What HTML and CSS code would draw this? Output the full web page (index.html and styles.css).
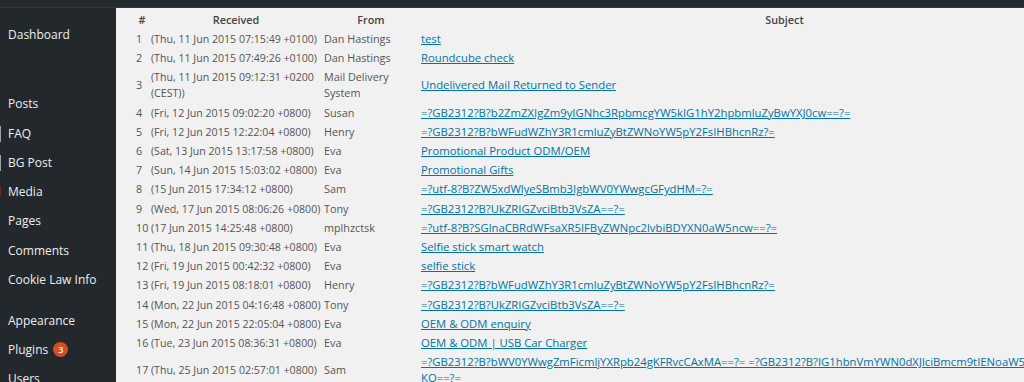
FILE: index.html
```html
<!DOCTYPE html>
<html lang="en">
<head>
    <meta charset="UTF-8">
    <title>Mail log</title>
    <link rel="stylesheet" href="styles.css">
</head>
<body>
<div class="adminbar"></div>
<div class="page">
    <ul class="menu">
        <li class="item">Dashboard</li>
        <li class="item sep-big">Posts</li>
        <li class="item"><i class="edge grey"></i>FAQ</li>
        <li class="item"><i class="edge grey"></i>BG Post</li>
        <li class="item"><i class="edge red"></i>Media</li>
        <li class="item">Pages</li>
        <li class="item">Comments</li>
        <li class="item">Cookie Law Info</li>
        <li class="item sep">Appearance</li>
        <li class="item">Plugins <span class="badge">3</span></li>
        <li class="item">Users</li>
    </ul>
    <div class="content">
        <table class="mails">
            <thead>
            <tr>
                <th class="c-num">#</th>
                <th class="c-date">Received</th>
                <th class="c-from">From</th>
                <th>Subject</th>
            </tr>
            </thead>
            <tbody>
            <tr><td class="num">1</td><td class="date">(Thu, 11 Jun 2015 07:15:49 +0100)</td><td>Dan Hastings</td><td><a href="#">test</a></td></tr>
            <tr><td class="num">2</td><td class="date">(Thu, 11 Jun 2015 07:49:26 +0100)</td><td>Dan Hastings</td><td><a href="#">Roundcube check</a></td></tr>
            <tr><td class="num">3</td><td class="date">(Thu, 11 Jun 2015 09:12:31 +0200<br>(CEST))</td><td>Mail Delivery System</td><td><a href="#">Undelivered Mail Returned to Sender</a></td></tr>
            <tr><td class="num">4</td><td class="date">(Fri, 12 Jun 2015 09:02:20 +0800)</td><td>Susan</td><td><a href="#">=?GB2312?B?b2ZmZXIgZm9yIGNhc3RpbmcgYW5kIG1hY2hpbmluZyBwYXJ0cw==?=</a></td></tr>
            <tr><td class="num">5</td><td class="date">(Fri, 12 Jun 2015 12:22:04 +0800)</td><td>Henry</td><td><a href="#">=?GB2312?B?bWFudWZhY3R1cmluZyBtZWNoYW5pY2FsIHBhcnRz?=</a></td></tr>
            <tr><td class="num">6</td><td class="date">(Sat, 13 Jun 2015 13:17:58 +0800)</td><td>Eva</td><td><a href="#">Promotional Product ODM/OEM</a></td></tr>
            <tr><td class="num">7</td><td class="date">(Sun, 14 Jun 2015 15:03:02 +0800)</td><td>Eva</td><td><a href="#">Promotional Gifts</a></td></tr>
            <tr><td class="num">8</td><td class="date">(15 Jun 2015 17:34:12 +0800)</td><td>Sam</td><td><a href="#">=?utf-8?B?ZW5xdWlyeSBmb3IgbWV0YWwgcGFydHM=?=</a></td></tr>
            <tr><td class="num">9</td><td class="date">(Wed, 17 Jun 2015 08:06:26 +0800)</td><td>Tony</td><td><a href="#">=?GB2312?B?UkZRIGZvciBtb3VsZA==?=</a></td></tr>
            <tr><td class="num">10</td><td class="date">(17 Jun 2015 14:25:48 +0800)</td><td>mplhzctsk</td><td><a href="#">=?utf-8?B?SGlnaCBRdWFsaXR5IFByZWNpc2lvbiBDYXN0aW5ncw==?=</a></td></tr>
            <tr><td class="num">11</td><td class="date">(Thu, 18 Jun 2015 09:30:48 +0800)</td><td>Eva</td><td><a href="#">Selfie stick smart watch</a></td></tr>
            <tr><td class="num">12</td><td class="date">(Fri, 19 Jun 2015 00:42:32 +0800)</td><td>Eva</td><td><a href="#">selfie stick</a></td></tr>
            <tr><td class="num">13</td><td class="date">(Fri, 19 Jun 2015 08:18:01 +0800)</td><td>Henry</td><td><a href="#">=?GB2312?B?bWFudWZhY3R1cmluZyBtZWNoYW5pY2FsIHBhcnRz?=</a></td></tr>
            <tr><td class="num">14</td><td class="date">(Mon, 22 Jun 2015 04:16:48 +0800)</td><td>Tony</td><td><a href="#">=?GB2312?B?UkZRIGZvciBtb3VsZA==?=</a></td></tr>
            <tr><td class="num">15</td><td class="date">(Mon, 22 Jun 2015 22:05:04 +0800)</td><td>Eva</td><td><a href="#">OEM &amp; ODM enquiry</a></td></tr>
            <tr><td class="num">16</td><td class="date">(Tue, 23 Jun 2015 08:36:31 +0800)</td><td>Eva</td><td><a href="#">OEM &amp; ODM | USB Car Charger</a></td></tr>
            <tr><td class="num">17</td><td class="date">(Thu, 25 Jun 2015 02:57:01 +0800)</td><td>Sam</td><td class="long"><a href="#">=?GB2312?B?bWV0YWwgZmFicmljYXRpb24gKFRvcCAxMA==?= =?GB2312?B?IG1hbnVmYWN0dXJlciBmcm9tIENoaW5h<br>KQ==?=</a></td></tr>
            </tbody>
        </table>
    </div>
</div>
</body>
</html>
```

FILE: styles.css
```css
*{
    margin: 0;
    padding: 0;
    list-style: none;
    box-sizing: border-box;
}
html,body{
    width: 100%;
    height: 100%;
    overflow: hidden;
}
body{
    background-color: #23282d;
    font-family: "Open Sans", "Noto Sans", sans-serif;
}
.adminbar{
    height: 8px;
    background-color: #23282d;
    border-bottom: 1px solid #32373c;
}
.page{
    display: flex;
    height: calc(100% - 8px);
}
.menu{
    width: 116px;
    flex-shrink: 0;
    padding-top: 12px;
    background-color: #23282d;
}
.menu .item{
    position: relative;
    height: 29.3px;
    line-height: 29.3px;
    padding-left: 8px;
    font-size: 12px;
    color: #eeeeee;
    white-space: nowrap;
}
.menu .sep-big{
    margin-top: 40px;
}
.menu .sep{
    margin-top: 11.5px;
}
.edge{
    position: absolute;
    left: 0;
    top: 7px;
    width: 1px;
    height: 16px;
}
.edge.grey{
    background-color: #9ea3a8;
}
.edge.red{
    top: 10px;
    height: 9px;
    background-color: #7a2020;
}
.badge{
    display: inline-block;
    width: 15px;
    height: 15px;
    margin-left: 2px;
    border-radius: 50%;
    background-color: #d54e21;
    color: #fff;
    font-size: 9px;
    font-weight: 600;
    line-height: 15px;
    text-align: center;
    vertical-align: 1px;
}
.content{
    flex: 1;
    min-width: 0;
    padding: 2px 0 0 18px;
    background-color: #f1f1f1;
}
.mails{
    width: 1016px;
    table-layout: fixed;
    border-collapse: separate;
    border-spacing: 1px;
    font-size: 10.8px;
    line-height: 16px;
    color: #555555;
}
.mails th{
    padding: 1px;
    font-weight: 600;
    color: #444444;
    text-align: center;
}
.mails td{
    padding: 1.1px 1px;
    vertical-align: middle;
    overflow-wrap: break-word;
}
.mails .num,
.mails .date,
.mails .long{
    white-space: nowrap;
}
.mails .date{
    font-size: 10.6px;
}
.mails .c-num{
    width: 14px;
}
.mails .c-date{
    width: 172px;
}
.mails .c-from{
    width: 96px;
}
.mails a{
    font-size: 11.3px;
    color: #0073aa;
}
```
